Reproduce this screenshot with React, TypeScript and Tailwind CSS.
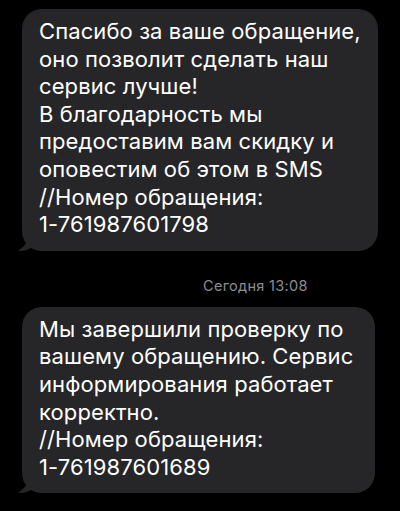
import React from "react";

interface Message {
  id: string;
  lines: string[];
}

const messages: Message[] = [
  {
    id: "m1",
    lines: [
      "Спасибо за ваше обращение,",
      "оно позволит сделать наш",
      "сервис лучше!",
      "В благодарность мы",
      "предоставим вам скидку и",
      "оповестим об этом в SMS",
      "//Номер обращения:",
      "1-761987601798",
    ],
  },
  {
    id: "m2",
    lines: [
      "Мы завершили проверку по",
      "вашему обращению. Сервис",
      "информирования работает",
      "корректно.",
      "//Номер обращения:",
      "1-761987601689",
    ],
  },
];

// little hook at the lower-left corner of an incoming bubble
const Tail: React.FC = () => (
  <svg
    className="absolute -left-[7px] bottom-0"
    width="22"
    height="20"
    viewBox="0 0 22 20"
  >
    <path
      d="M14 0 C14 8 12 14 4 19 C3 19.6 3.4 20 4.2 20 C10 20 15 18 19 15 L22 0 Z"
      fill="#262628"
    />
  </svg>
);

const Bubble: React.FC<{ message: Message; width: string }> = ({
  message,
  width,
}) => (
  <div className={`relative ${width}`}>
    <Tail />
    <div className="relative rounded-[20px] bg-[#262628] px-[17px] pt-[9px] pb-[12px]">
      {message.lines.map((line, i) => (
        <div key={i} className="whitespace-nowrap">
          {line}
        </div>
      ))}
    </div>
  </div>
);

const App: React.FC = () => {
  return (
    <div
      className="h-[511px] w-[400px] overflow-hidden bg-black pt-[9px] text-[22px] leading-[27.6px] tracking-[0.1px] text-white"
      style={{ fontFamily: "Inter, 'Noto Sans', sans-serif" }}
    >
      <div className="pl-[22px]">
        <Bubble message={messages[0]} width="w-[356px]" />
      </div>

      <div className="pt-[26px] pb-[13px] pl-[203px] text-[14.5px] leading-[17px] tracking-[0.3px] text-[#8d8d93]">
        Сегодня 13:08
      </div>

      <div className="pl-[22px]">
        <Bubble message={messages[1]} width="w-[353px]" />
      </div>
    </div>
  );
};

export default App;
